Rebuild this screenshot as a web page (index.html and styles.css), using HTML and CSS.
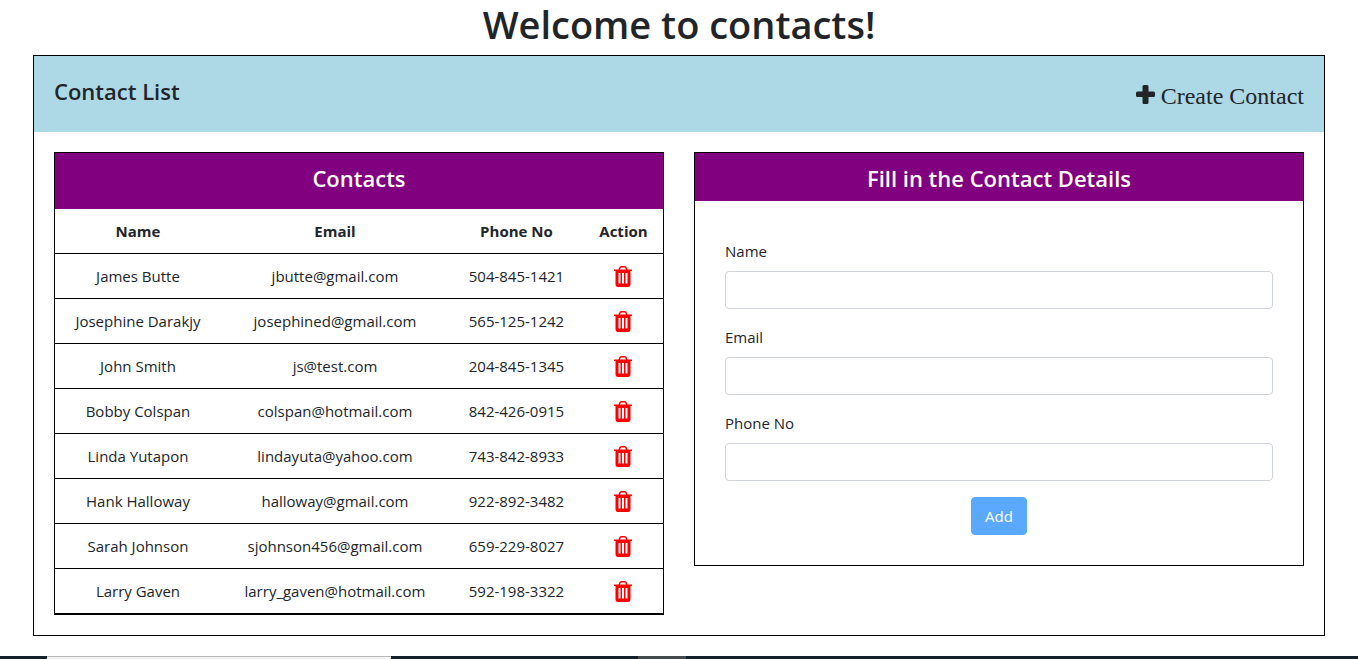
FILE: index.html
```html
<!DOCTYPE html>
<html lang="en">
<head>
<meta charset="utf-8">
<title>Contacts</title>
<meta name="viewport" content="width=device-width, initial-scale=1">
<link rel="stylesheet" href="styles.css">
</head>
<body>
<svg class="sprite" width="0" height="0" aria-hidden="true">
  <symbol id="trash" viewBox="0 0 20 22">
    <path fill="none" stroke="currentColor" stroke-width="1.5" d="M6.200 5L6.800 3Q7.200 1.800 8.300 1.800H11.700Q12.800 1.800 13.200 3L13.800 5"/>
    <path fill="currentColor" fill-rule="evenodd" d="M1 4.500H19V6H17.500V19Q17.500 22 15 22H5Q2.500 22 2.500 19V6H1ZM5.500 8V18.500H7.500V8ZM9 8V18.500H11V8ZM12.500 8V18.500H14.500V8Z"/>
  </symbol>
</svg>
<main class="page">
  <h1 class="page-title">Welcome to contacts!</h1>
  <section class="board">
    <header class="board-header">
      <h2 class="board-title">Contact List</h2>
      <button class="create" type="button">
        <svg class="plus" viewBox="0 0 19 19" aria-hidden="true"><path fill="currentColor" d="M8 0h3q1.500 0 1.500 1.500v5h5q1.500 0 1.500 1.500v2.500q0 1.500-1.500 1.500h-5v5.500q0 1.500-1.500 1.500h-3q-1.500 0-1.500-1.500V12h-5Q0 12 0 10.500V8q0-1.500 1.500-1.500h5v-5Q6.500 0 8 0z"/></svg>
        <span>Create Contact</span>
      </button>
    </header>
    <div class="panels">
      <section class="panel">
        <h2 class="panel-title panel-title-tall">Contacts</h2>
        <table class="contacts">
          <colgroup><col class="col-name"><col class="col-email"><col class="col-phone"><col class="col-action"></colgroup>
          <thead><tr><th>Name</th><th>Email</th><th>Phone No</th><th>Action</th></tr></thead>
          <tbody>
            <tr><td>James Butte</td><td>jbutte@gmail.com</td><td>504-845-1421</td><td><button class="delete" type="button" aria-label="Delete James Butte"><svg class="trash"><use href="#trash"/></svg></button></td></tr>
            <tr><td>Josephine Darakjy</td><td>josephined@gmail.com</td><td>565-125-1242</td><td><button class="delete" type="button" aria-label="Delete Josephine Darakjy"><svg class="trash"><use href="#trash"/></svg></button></td></tr>
            <tr><td>John Smith</td><td>js@test.com</td><td>204-845-1345</td><td><button class="delete" type="button" aria-label="Delete John Smith"><svg class="trash"><use href="#trash"/></svg></button></td></tr>
            <tr><td>Bobby Colspan</td><td>colspan@hotmail.com</td><td>842-426-0915</td><td><button class="delete" type="button" aria-label="Delete Bobby Colspan"><svg class="trash"><use href="#trash"/></svg></button></td></tr>
            <tr><td>Linda Yutapon</td><td>lindayuta@yahoo.com</td><td>743-842-8933</td><td><button class="delete" type="button" aria-label="Delete Linda Yutapon"><svg class="trash"><use href="#trash"/></svg></button></td></tr>
            <tr><td>Hank Halloway</td><td>halloway@gmail.com</td><td>922-892-3482</td><td><button class="delete" type="button" aria-label="Delete Hank Halloway"><svg class="trash"><use href="#trash"/></svg></button></td></tr>
            <tr><td>Sarah Johnson</td><td>sjohnson456@gmail.com</td><td>659-229-8027</td><td><button class="delete" type="button" aria-label="Delete Sarah Johnson"><svg class="trash"><use href="#trash"/></svg></button></td></tr>
            <tr><td>Larry Gaven</td><td>larry_gaven@hotmail.com</td><td>592-198-3322</td><td><button class="delete" type="button" aria-label="Delete Larry Gaven"><svg class="trash"><use href="#trash"/></svg></button></td></tr>
          </tbody>
        </table>
      </section>
      <section class="panel">
        <h2 class="panel-title">Fill in the Contact Details</h2>
        <form class="form">
          <div class="field"><label for="name">Name</label><input id="name" type="text"></div>
          <div class="field"><label for="email">Email</label><input id="email" type="email"></div>
          <div class="field"><label for="phone">Phone No</label><input id="phone" type="tel"></div>
          <button class="add" type="submit" disabled>Add</button>
        </form>
      </section>
    </div>
  </section>
</main>
<div class="taskbar"><span class="task-search"></span><span class="task-gap"></span><span class="task-active"></span></div>
</body>
</html>
```
FILE: styles.css
```css
*, *::before, *::after { box-sizing: border-box; }

body {
  margin: 0;
  min-height: 100vh;
  display: flex;
  flex-direction: column;
  justify-content: space-between;
  background: #fff;
  color: #212529;
  font: 400 15px/24px "Open Sans", "Noto Sans", sans-serif;
}

h1, h2 { margin: 0; font-weight: 600; }

.sprite { position: absolute; }

.page { padding: 0 33px 20px; }

.page-title {
  padding-bottom: 7px;
  font-size: 38px;
  line-height: 48px;
  text-align: center;
}

.board { border: 1px solid #000; }

.board-header {
  display: flex;
  justify-content: space-between;
  padding: 20px;
  background: lightblue;
}

.board-title { font-size: 22px; line-height: 30px; }

.create {
  display: flex;
  align-items: center;
  gap: 6px;
  padding: 4px 0 0;
  border: 0;
  background: none;
  color: inherit;
  font: 24px/32px "Liberation Serif", serif;
}

.plus { width: 19px; height: 19px; margin-bottom: 4px; }

.panels {
  display: grid;
  grid-template-columns: 1fr 1fr;
  align-items: start;
  gap: 30px;
  padding: 20px;
}

.panel { border: 1px solid #000; }

.panel-title {
  padding: 10px 0 8px;
  background: purple;
  color: #fff;
  font-size: 22px;
  line-height: 30px;
  text-align: center;
}

.panel-title-tall { padding-bottom: 16px; }

.contacts {
  width: 100%;
  table-layout: fixed;
  border-spacing: 0;
  text-align: center;
}

.col-name { width: 27.3%; }
.col-email { width: 37.5%; }
.col-phone { width: 22.2%; }
.col-action { width: 13%; }

.contacts th, .contacts td {
  height: 45px;
  padding: 0;
  border-bottom: 1px solid #000;
}

.contacts th { font-weight: 700; }

.delete {
  display: block;
  margin: 0 auto;
  padding: 0;
  border: 0;
  background: none;
  color: red;
}

.trash { display: block; width: 20px; height: 22px; }

.form { padding: 38px 30px 30px; }

.field { margin-bottom: 16px; }

.field label { display: block; margin-bottom: 8px; }

.field input {
  display: block;
  width: 100%;
  height: 38px;
  padding: 6px 12px;
  border: 1px solid #ced4da;
  border-radius: 4px;
  background: #fff;
  font: inherit;
}

.add {
  display: block;
  margin: 0 auto;
  padding: 6px 13px;
  border: 1px solid #5aa9ff;
  border-radius: 4px;
  background: #5aa9ff;
  color: #fff;
  font: inherit;
}

.taskbar { display: flex; height: 3px; padding-left: 47px; background: #15212a; }
.task-search { width: 344px; border-top: 1px solid #b9b9b9; background: #f2f2f2; }
.task-gap { width: 247px; }
.task-active { width: 48px; background: #434b4e; }
```
